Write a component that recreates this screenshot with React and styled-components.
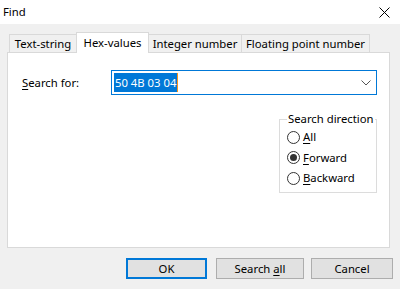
import React from 'react';
import styled, { createGlobalStyle } from 'styled-components';

const Global = createGlobalStyle`
  html, body { margin: 0; padding: 0; }
  body {
    width: 400px; height: 289px; overflow: hidden; background: #f0f0f0;
    font-family: "Noto Sans", "Liberation Sans", sans-serif; font-size: 11.3px; color: #000;
  }
  * { box-sizing: border-box; }
`;

const Window = styled.div`
  width: 400px; height: 289px; display: flex; flex-direction: column; background: #f0f0f0;
`;

const TitleBar = styled.div`
  height: 24px; flex: none; background: #fff; display: flex; align-items: center;
  justify-content: space-between; padding: 0 10px 0 3px;
`;

const Title = styled.span`
  font-size: 11.3px; line-height: 16px;
`;

const CloseIcon = styled.svg`
  width: 11px; height: 11px; display: block;
`;

const Body = styled.div`
  display: flex; flex-direction: column; padding: 8px 0 0 7px;
`;

const TabStrip = styled.div`
  display: flex; align-items: flex-end; height: 20px; padding-left: 2px;
  position: relative; z-index: 1;
`;

const Tab = styled.div`
  width: ${p => p.$w}px;
  height: ${p => (p.$active ? 21 : 18)}px;
  margin-bottom: ${p => (p.$active ? -1 : 0)}px;
  margin-left: ${p => (p.$first ? 0 : -1)}px;
  position: relative;
  z-index: ${p => (p.$active ? 2 : 1)};
  background: ${p => (p.$active ? '#fff' : '#f0f0f0')};
  border: 1px solid #d9d9d9;
  border-bottom: none;
  display: flex; justify-content: center;
  padding-top: ${p => (p.$active ? 2 : 1)}px;
  line-height: 16px; white-space: nowrap;
`;

const Panel = styled.div`
  width: 383px; height: 196px; background: #fff; border: 1px solid #d9d9d9;
  display: flex; flex-direction: column; padding: 17px 12px 0 14px;
`;

const SearchRow = styled.div`
  display: flex; align-items: center;
`;

const Label = styled.span`
  width: 89px; line-height: 16px;
`;

const Mn = styled.span`
  text-decoration: underline; text-underline-offset: 2px;
`;

const Combo = styled.div`
  width: 266px; height: 25px; border: 1px solid #0078d7; background: #fff;
  display: flex; align-items: center; padding: 0 5px 0 2px;
`;

const Selected = styled.span`
  background: #0078d7; color: #fff; height: 19px; line-height: 19px; padding: 0 1px;
`;

const Caret = styled.span`
  width: 1px; height: 19px; background: #f7941d;
`;

const Spacer = styled.span`
  flex: 1;
`;

const Chevron = styled.svg`
  width: 10px; height: 6px; display: block;
`;

const Group = styled.fieldset`
  align-self: flex-end; width: 98px; margin: 16px 0 0 0; padding: 0 0 3px 7px;
  border: 1px solid #dcdcdc; min-width: 0;
`;

const Legend = styled.legend`
  padding: 0 1px; line-height: 16px; white-space: nowrap;
`;

const RadioRow = styled.div`
  height: 20.5px; display: flex; align-items: center; gap: 3px; line-height: 16px;
`;

const RadioCircle = styled.span`
  width: 13px; height: 13px; border-radius: 50%; border: 1px solid #333; background: #fff;
  display: flex; align-items: center; justify-content: center; flex: none;
  &::after {
    content: '';
    width: 7px; height: 7px; border-radius: 50%;
    background: ${p => (p.$checked ? '#333' : 'transparent')};
  }
`;

const ButtonRow = styled.div`
  display: flex; justify-content: flex-end; padding-right: 7px; margin-top: 10px;
`;

const Button = styled.button`
  width: ${p => p.$w}px; height: 21px; margin-left: ${p => p.$ml}px;
  background: #e1e1e1; border: ${p => (p.$default ? '2px solid #0078d7' : '1px solid #adadad')};
  font-family: inherit; font-size: 11.3px; color: #000; padding: 0; line-height: 16px;
`;

export default function App() {
  return (
    <Window>
      <Global />
      <TitleBar>
        <Title>Find</Title>
        <CloseIcon viewBox="0 0 11 11">
          <path d="M0.5 0.5 L10.5 10.5 M10.5 0.5 L0.5 10.5" stroke="#000" strokeWidth="1" fill="none" />
        </CloseIcon>
      </TitleBar>
      <Body>
        <TabStrip>
          <Tab $w={68} $first>Text-string</Tab>
          <Tab $w={73} $active>Hex-values</Tab>
          <Tab $w={94}>Integer number</Tab>
          <Tab $w={129}>Floating point number</Tab>
        </TabStrip>
        <Panel>
          <SearchRow>
            <Label><Mn>S</Mn>earch for:</Label>
            <Combo>
              <Selected>50 4B 03 04</Selected>
              <Caret />
              <Spacer />
              <Chevron viewBox="0 0 10 6">
                <polyline points="0.5,0.5 5,5 9.5,0.5" fill="none" stroke="#555" strokeWidth="1" />
              </Chevron>
            </Combo>
          </SearchRow>
          <Group>
            <Legend>Search direction</Legend>
            <RadioRow><RadioCircle /><span><Mn>A</Mn>ll</span></RadioRow>
            <RadioRow><RadioCircle $checked /><span><Mn>F</Mn>orward</span></RadioRow>
            <RadioRow><RadioCircle /><span><Mn>B</Mn>ackward</span></RadioRow>
          </Group>
        </Panel>
        <ButtonRow>
          <Button $w={81} $ml={0} $default>OK</Button>
          <Button $w={88} $ml={9}>Search <Mn>a</Mn>ll</Button>
          <Button $w={82} $ml={7}>Cancel</Button>
        </ButtonRow>
      </Body>
    </Window>
  );
}
